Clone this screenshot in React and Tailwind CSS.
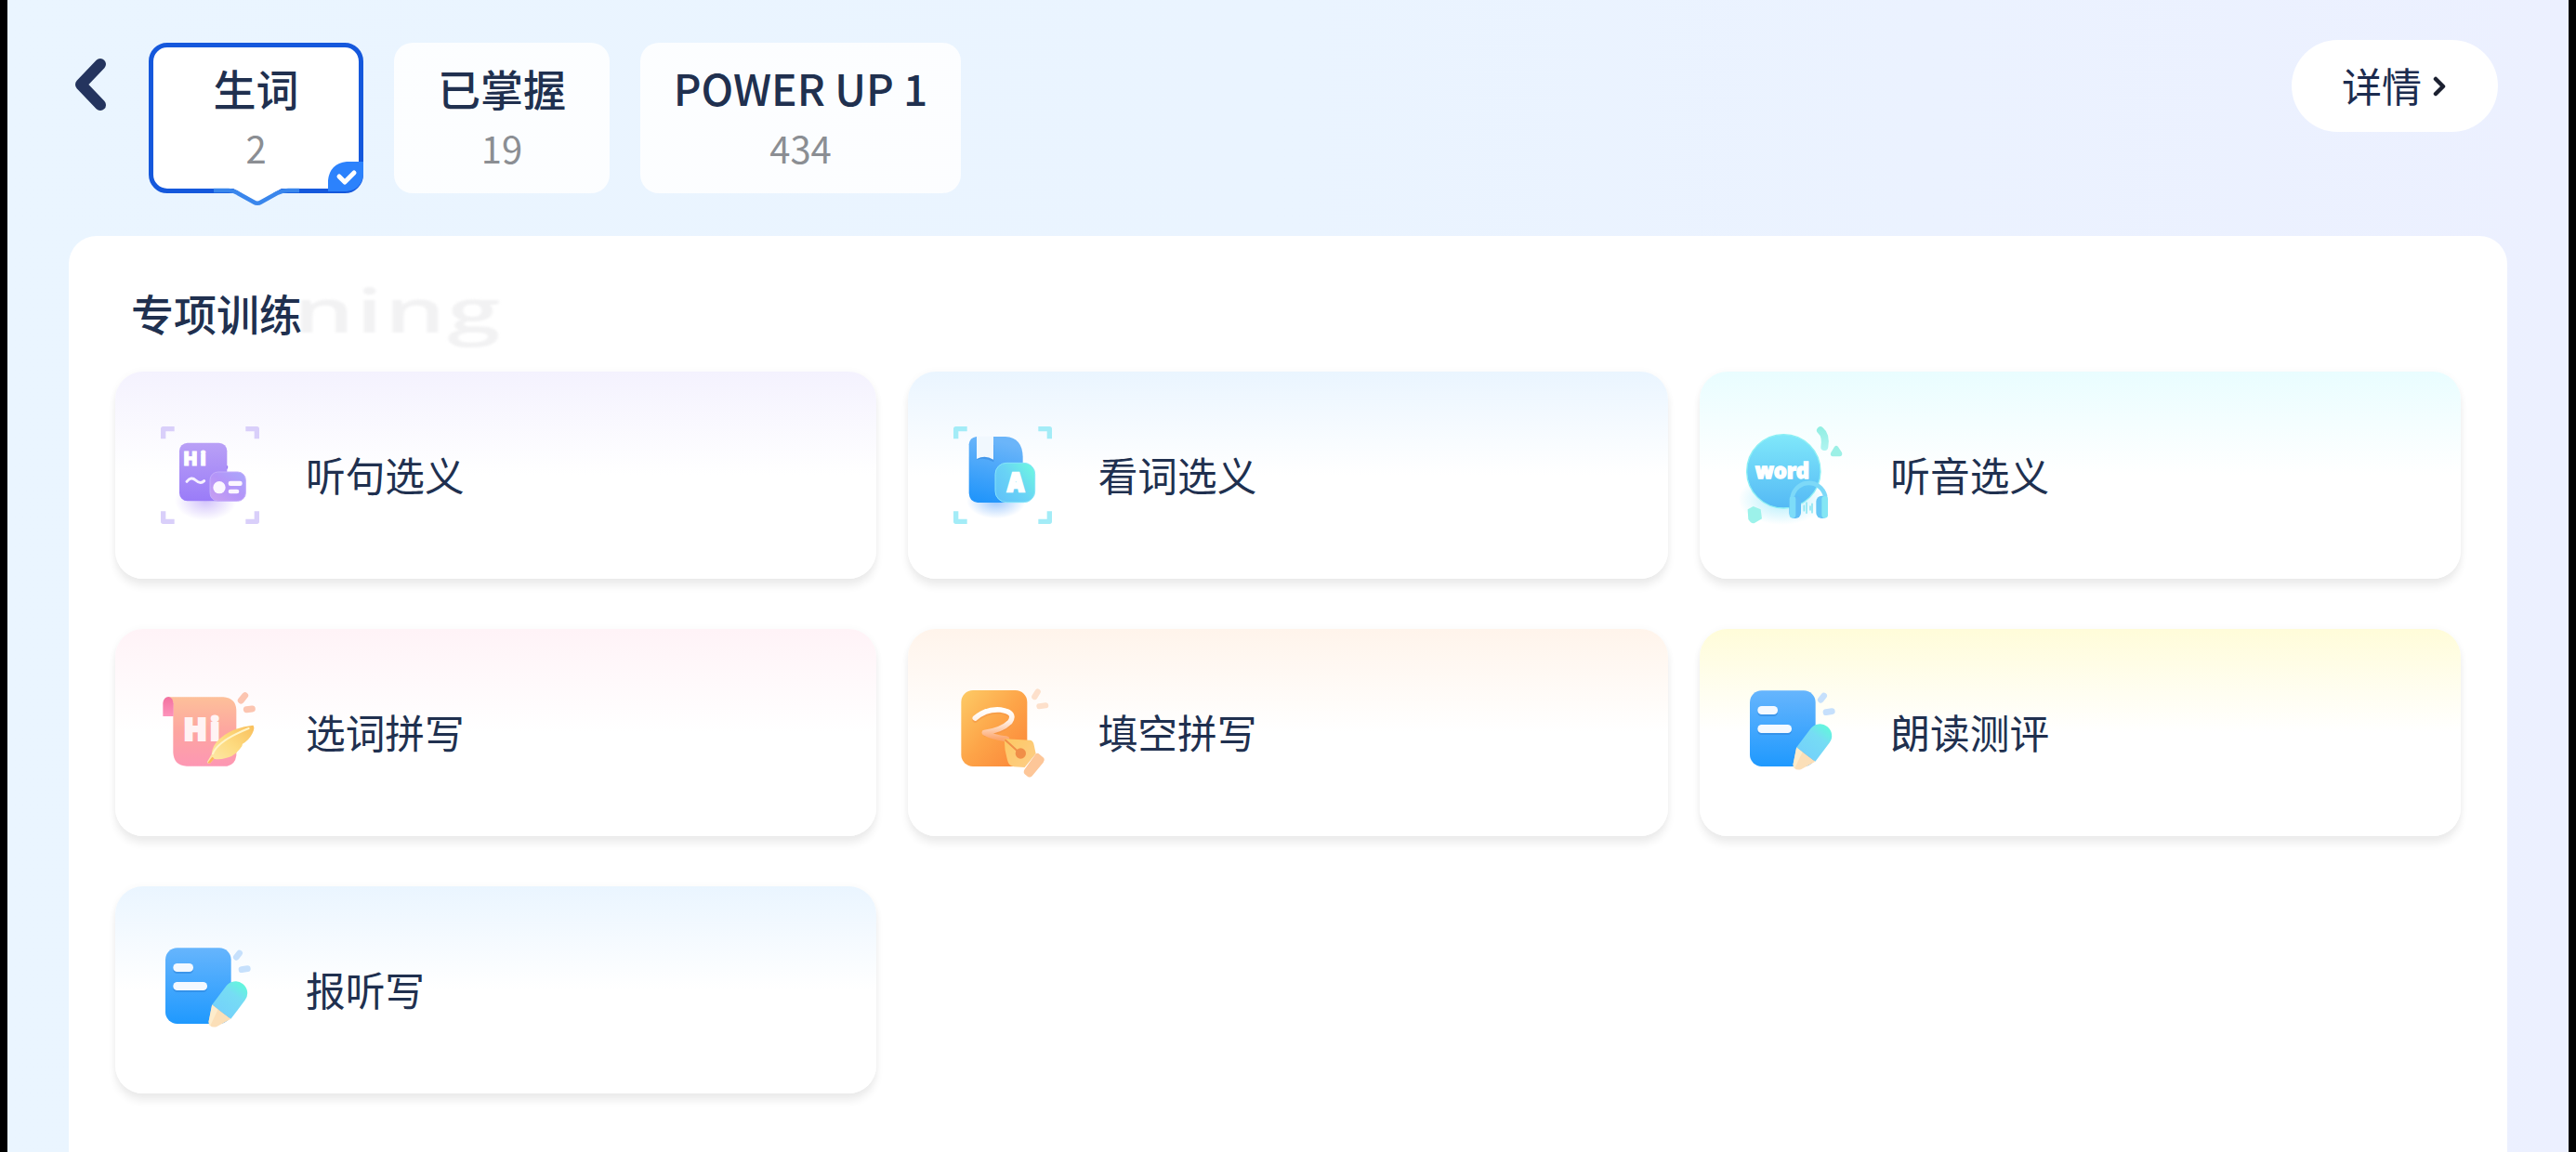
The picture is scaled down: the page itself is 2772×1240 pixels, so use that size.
const tabs = [
  { id: 'new', name: '生词', count: 2, width: 'w-[231px]' },
  { id: 'mastered', name: '已掌握', count: 19, width: 'w-[232px]' },
  { id: 'book', name: 'POWER UP 1', count: 434, width: 'w-[345px]' },
];

const Corners = ({ color }) => (
  <g stroke={color} strokeWidth="16" fill="none" strokeLinejoin="round">
    <path d="M8 40V8H44" />
    <path d="M274 8H310V40" />
    <path d="M8 274V307H44" />
    <path d="M274 307H310V274" />
  </g>
);

const SentenceIcon = () => (
  <svg viewBox="0 0 318 318" className="h-[106px] w-[106px] overflow-visible">
    <defs>
      <linearGradient id="sentence-card" x1="0" y1="0" x2="0" y2="1">
        <stop offset="0" stopColor="#b9a0f6" />
        <stop offset="1" stopColor="#9a7cf8" />
      </linearGradient>
      <linearGradient id="sentence-chip" x1="0" y1="1" x2="1" y2="0">
        <stop offset="0" stopColor="#c9a0f0" />
        <stop offset="0.5" stopColor="#b494f8" />
        <stop offset="1" stopColor="#a9a8fb" />
      </linearGradient>
      <radialGradient id="sentence-shadow">
        <stop offset="0" stopColor="#b59cf8" stopOpacity="0.6" />
        <stop offset="1" stopColor="#b59cf8" stopOpacity="0" />
      </radialGradient>
    </defs>
    <Corners color="#d9cffa" />
    <ellipse cx="145" cy="240" rx="100" ry="64" fill="url(#sentence-shadow)" />
    <path d="M200 142L214 126Q220 130 214 138L204 150Z" fill="#8f6df0" />
    <rect x="60" y="53" width="154" height="188" rx="26" fill="url(#sentence-card)" />
    <text x="72" y="127" fontSize="62" fontWeight="900" letterSpacing="7" fill="#fff" stroke="#fff" strokeWidth="3" className="font-['Noto_Sans']">Hi</text>
    <path d="M84 178Q98 160 113 174T140 176" stroke="#f6f0ff" strokeWidth="9" strokeLinecap="round" fill="none" />
    <rect x="159" y="147" width="115" height="94" rx="26" fill="url(#sentence-chip)" stroke="#c3acfb" strokeWidth="3" />
    <circle cx="189" cy="197" r="20" fill="#fbf6ff" />
    <rect x="218" y="176" width="45" height="16" rx="7" fill="#fbf6ff" />
    <rect x="218" y="203" width="35" height="14" rx="7" fill="#fbf6ff" />
  </svg>
);

const BookIcon = () => (
  <svg viewBox="0 0 318 318" className="h-[106px] w-[106px] overflow-visible">
    <defs>
      <linearGradient id="book-cover" x1="0.2" y1="0" x2="0" y2="1">
        <stop offset="0" stopColor="#6bb5f9" />
        <stop offset="1" stopColor="#1c93fb" />
      </linearGradient>
      <linearGradient id="book-badge" x1="0" y1="1" x2="1" y2="0.2">
        <stop offset="0" stopColor="#5fc0fa" />
        <stop offset="0.55" stopColor="#69d3f5" />
        <stop offset="1" stopColor="#6df5e2" />
      </linearGradient>
      <radialGradient id="book-shadow">
        <stop offset="0" stopColor="#5aa2fb" stopOpacity="0.6" />
        <stop offset="1" stopColor="#5aa2fb" stopOpacity="0" />
      </radialGradient>
    </defs>
    <Corners color="#a3ecf7" />
    <ellipse cx="138" cy="240" rx="96" ry="58" fill="url(#book-shadow)" />
    <path d="M74 33H168Q222 36 224 98V246H78Q52 244 50 216V58Q52 36 74 33Z" fill="url(#book-cover)" />
    <path d="M76 108Q102 98 130 115V60H76Z" fill="#2e7fd6" opacity="0.45" />
    <path d="M75 32H129V107Q102 90 75 105Z" fill="#f1f8fe" />
    <rect x="135" y="118" width="128" height="127" rx="36" fill="url(#book-badge)" stroke="#86e4fa" strokeWidth="3" />
    <text x="174" y="211" fontSize="84" fontWeight="900" fill="#fff" stroke="#fff" strokeWidth="7" textLength="54" lengthAdjust="spacingAndGlyphs" className="font-['Noto_Sans']">A</text>
  </svg>
);

const WordIcon = () => (
  <svg viewBox="0 0 318 318" className="h-[106px] w-[106px] overflow-visible">
    <defs>
      <linearGradient id="word-disc" x1="0" y1="0" x2="0" y2="1">
        <stop offset="0" stopColor="#80e8fa" />
        <stop offset="1" stopColor="#54b9f5" />
      </linearGradient>
      <linearGradient id="word-mint" gradientUnits="userSpaceOnUse" x1="0" y1="0" x2="0" y2="80">
        <stop offset="0" stopColor="#8feee2" />
        <stop offset="1" stopColor="#b2f4f1" />
      </linearGradient>
      <radialGradient id="word-shadow">
        <stop offset="0" stopColor="#9ae9fb" stopOpacity="0.8" />
        <stop offset="1" stopColor="#9ae9fb" stopOpacity="0" />
      </radialGradient>
    </defs>
    <ellipse cx="118" cy="236" rx="140" ry="82" fill="url(#word-shadow)" />
    <circle cx="124" cy="145" r="119" fill="url(#word-disc)" stroke="#8cf0f4" strokeWidth="4" />
    <path d="M243 13Q262 28 256 66" stroke="url(#word-mint)" strokeWidth="24" strokeLinecap="round" fill="none" />
    <path d="M288 66Q294 58 300 66L312 84Q316 96 304 97H282Q272 94 277 84Z" fill="#9cf0e6" />
    <path d="M8 268L26 258L50 268L54 298L30 312Q20 316 10 300Z" fill="#9cf2ea" />
    <text x="32" y="168" fontSize="70" fontWeight="900" fill="#fff" stroke="#fff" strokeWidth="4" textLength="175" lengthAdjust="spacingAndGlyphs" className="font-['Noto_Sans']">word</text>
    <path d="M153 246V224A54 54 0 0 1 258 224V246" stroke="#7dd9f8" strokeWidth="14" fill="none" />
    <rect x="142" y="224" width="38" height="73" rx="18" fill="#5fbdf5" />
    <rect x="229" y="224" width="38" height="73" rx="18" fill="#67c6f5" />
    <rect x="143" y="225" width="20" height="71" rx="10" fill="#7ddcf8" />
    <rect x="247" y="225" width="20" height="71" rx="10" fill="#84e6f4" />
    <path d="M190 256V272M198 246V280M210 258V270M216 250V278" stroke="#8fe6f2" strokeWidth="5" strokeLinecap="round" />
  </svg>
);

const ScrollIcon = () => (
  <svg viewBox="0 0 318 318" className="h-[106px] w-[106px] overflow-visible">
    <defs>
      <linearGradient id="scroll-paper" x1="0" y1="0" x2="0" y2="1">
        <stop offset="0" stopColor="#fdc09a" />
        <stop offset="0.5" stopColor="#fda5a0" />
        <stop offset="1" stopColor="#fd97b4" />
      </linearGradient>
      <linearGradient id="scroll-roll" x1="0" y1="0" x2="0" y2="1">
        <stop offset="0" stopColor="#f2719f" />
        <stop offset="1" stopColor="#fd93bb" />
      </linearGradient>
      <linearGradient id="scroll-feather" x1="1" y1="0" x2="0" y2="1">
        <stop offset="0" stopColor="#f9bf5c" />
        <stop offset="0.5" stopColor="#fddb80" />
        <stop offset="1" stopColor="#fde9b0" />
      </linearGradient>
    </defs>
    <path d="M24 43H202Q243 46 244 86V232Q240 262 214 266H84Q42 264 40 222V60Z" fill="url(#scroll-paper)" />
    <path d="M7 105V62Q10 42 25 42Q39 44 41 64V105Z" fill="url(#scroll-roll)" />
    <text x="73" y="182" fontSize="102" fontWeight="900" letterSpacing="8" fill="#fff3f4" stroke="#fff3f4" strokeWidth="6" textLength="126" lengthAdjust="spacingAndGlyphs" className="font-['Noto_Sans']">Hi</text>
    <path d="M150 252L164 228Q166 198 192 176Q236 140 298 134Q305 142 296 160Q284 184 264 194L262 202Q240 234 210 240Q188 246 172 242L160 256Q150 260 150 252Z" fill="url(#scroll-feather)" />
    <path d="M152 254L166 236Q174 240 172 242L160 256Q154 258 152 254Z" fill="#fbb45c" />
    <path d="M168 226Q184 184 284 144" stroke="#fff4c8" strokeWidth="6" strokeLinecap="round" fill="none" />
    <path d="M259 54L272 38" stroke="#fcc5b1" strokeWidth="21" strokeLinecap="round" />
    <path d="M277 83L295 81" stroke="#fcc5b1" strokeWidth="21" strokeLinecap="round" />
  </svg>
);

const PenIcon = () => (
  <svg viewBox="0 0 318 318" className="h-[106px] w-[106px] overflow-visible">
    <defs>
      <linearGradient id="pen-page" x1="0" y1="0" x2="1" y2="1">
        <stop offset="0" stopColor="#fdcb66" />
        <stop offset="0.5" stopColor="#fda448" />
        <stop offset="1" stopColor="#fb8438" />
      </linearGradient>
      <linearGradient id="pen-stroke" x1="0" y1="0" x2="0" y2="1">
        <stop offset="0" stopColor="#ffffff" />
        <stop offset="0.4" stopColor="#fff0e4" />
        <stop offset="1" stopColor="#fca66e" />
      </linearGradient>
      <linearGradient id="pen-nib" x1="0" y1="0" x2="1" y2="1">
        <stop offset="0" stopColor="#fdc862" />
        <stop offset="1" stopColor="#fdce88" />
      </linearGradient>
    </defs>
    <rect x="25" y="21" width="213" height="246" rx="38" fill="url(#pen-page)" />
    <path d="M70 117Q108 85 158 89Q204 99 178 131Q150 157 104 162" stroke="#ee8a40" strokeOpacity="0.4" strokeWidth="17" strokeLinecap="round" fill="none" />
    <path d="M70 111Q106 80 152 84Q204 92 182 124Q156 150 100 158Q126 172 172 178" stroke="url(#pen-stroke)" strokeWidth="17" strokeLinecap="round" strokeLinejoin="round" fill="none" />
    <path d="M164 178L248 182Q258 184 260 198L266 226L230 270L196 268Q178 266 174 246Q164 212 164 178Z" fill="url(#pen-nib)" />
    <path d="M168 182L212 222" stroke="#f08e48" strokeWidth="6" strokeLinecap="round" />
    <circle cx="217" cy="225" r="17" fill="#f08e48" />
    <path d="M266 226Q272 222 278 228L292 240Q296 246 290 254L254 298Q248 304 240 300L230 292Q224 286 230 276Z" fill="#fdc698" />
    <path d="M262 42L272 26" stroke="#fde0cb" strokeWidth="19" strokeLinecap="round" />
    <path d="M277 73L298 70" stroke="#fde0cb" strokeWidth="18" strokeLinecap="round" />
  </svg>
);

const NoteIcon = ({ id }) => (
  <svg viewBox="0 0 318 318" className="h-[106px] w-[106px] overflow-visible">
    <defs>
      <linearGradient id={`${id}-page`} x1="0" y1="0" x2="0" y2="1">
        <stop offset="0" stopColor="#66b5fd" />
        <stop offset="1" stopColor="#1f99fe" />
      </linearGradient>
      <linearGradient id={`${id}-pencil`} x1="0" y1="0" x2="0" y2="1">
        <stop offset="0" stopColor="#62f7dc" />
        <stop offset="0.4" stopColor="#76dcf4" />
        <stop offset="1" stopColor="#74d2fa" />
      </linearGradient>
    </defs>
    <rect x="15" y="22" width="212" height="245" rx="38" fill={`url(#${id}-page)`} />
    <rect x="40" y="78" width="65" height="27" rx="13" fill="#2a7fd8" opacity="0.5" />
    <rect x="40" y="138" width="110" height="27" rx="13" fill="#2a7fd8" opacity="0.5" />
    <rect x="40" y="72" width="65" height="27" rx="13" fill="#f4f9ff" />
    <rect x="40" y="132" width="110" height="27" rx="13" fill="#f4f9ff" />
    <g transform="translate(161 275) rotate(37)">
      <path d="M-38 -58V-134A38 38 0 0 1 38 -134V-58Z" fill={`url(#${id}-pencil)`} />
      <path d="M-38 -58H38L16 -10Q0 8 -14 -8Z" fill="#fbdfb8" />
      <path d="M-38 -58H-14L-2 0Q-8 0 -14 -8Z" fill="#fdeccb" />
    </g>
    <path d="M244 52L254 39" stroke="#c6e0fc" strokeWidth="20" strokeLinecap="round" />
    <path d="M261 92L280 89" stroke="#c6e0fc" strokeWidth="20" strokeLinecap="round" />
  </svg>
);

const trainings = [
  { name: '听句选义', icon: <SentenceIcon />, tint: 'from-[#f4f2fe]' },
  { name: '看词选义', icon: <BookIcon />, tint: 'from-[#eaf5ff]' },
  { name: '听音选义', icon: <WordIcon />, tint: 'from-[#e9fdff]' },
  { name: '选词拼写', icon: <ScrollIcon />, tint: 'from-[#fff3f7]' },
  { name: '填空拼写', icon: <PenIcon />, tint: 'from-[#fff4eb]' },
  { name: '朗读测评', icon: <NoteIcon id="reading" />, tint: 'from-[#fffcd9]' },
  { name: '报听写', icon: <NoteIcon id="dictation" />, tint: 'from-[#eaf5ff]' },
];

const Tab = ({ tab, active }) => (
  <button
    type="button"
    className={`relative flex h-[162px] flex-col items-center rounded-[20px] ${tab.width} ${active ? 'bg-white' : 'bg-white/85'}`}
  >
    {active && <span className="absolute inset-0 rounded-[20px] border-[5px] border-[#1558dc]" />}
    <span className="mt-[17px] text-[46px] leading-[62px] font-medium whitespace-nowrap text-[#20304f]">{tab.name}</span>
    <span className="mt-[7px] text-[40px] leading-[54px] text-[#8b8e93]">{tab.count}</span>
    {active && (
      <>
        <svg viewBox="0 0 38 32" className="absolute right-0 bottom-[2px] h-8 w-[38px]">
          <path d="M0 32V20Q2 2 20 0H38V14Q36 30 20 32Z" fill="#2c82fc" />
          <path d="M12 16L18 22L28 12" stroke="#fff" strokeWidth="5" strokeLinecap="round" strokeLinejoin="round" fill="none" />
        </svg>
        <svg viewBox="0 0 92 24" className="absolute bottom-[-15px] left-[70px] h-6 w-[92px]">
          <path d="M14 0H80L64 9L47 18L30 9Z" fill="#fff" />
          <path d="M0 6H16Q22 6 26 9L43 18.500Q47 21 51 18.500L68 9Q74 6 80 6H92" stroke="#3a86ec" strokeWidth="4.500" fill="none" />
        </svg>
      </>
    )}
  </button>
);

const TrainingCard = ({ training }) => (
  <button
    type="button"
    className={`flex h-[223px] items-center rounded-[30px] bg-linear-to-b to-white to-50% pl-[49px] text-left shadow-[0_8px_9px_rgba(0,0,0,0.07),0_0_8px_rgba(0,0,0,0.03)] ${training.tint}`}
  >
    {training.icon}
    <span className="-mt-[4px] ml-[50px] text-[42.700px] leading-[60px] text-[#20304f]">{training.name}</span>
  </button>
);

const App = () => (
  <div className="h-[1240px] w-[2772px] overflow-hidden bg-black px-2 font-['Noto_Sans_CJK_SC',sans-serif]">
    <main className="flex h-full flex-col bg-linear-to-r from-[#eaf5ff] via-[#eaf4ff] to-[#ecf0ff] px-[66px]">
      <header className="flex h-[254px] shrink-0 items-start">
        <button type="button" aria-label="返回" className="mt-[62px] ml-[5px] h-[58px] w-[36px]">
          <svg viewBox="0 0 36 58" className="h-full w-full">
            <path d="M29 7L8 29L29 51" stroke="#24345e" strokeWidth="12" strokeLinecap="round" strokeLinejoin="round" fill="none" />
          </svg>
        </button>
        <nav className="mt-[46px] ml-[45px] flex gap-[33px]">
          {tabs.map((tab, i) => (
            <Tab key={tab.id} tab={tab} active={i === 0} />
          ))}
        </nav>
        <button type="button" className="mt-[43px] mr-[10px] ml-auto flex h-[99px] w-[222px] items-center rounded-full bg-white pl-[54px]">
          <span className="-mt-[4px] text-[43px] leading-[60px] text-[#1c2c4f]">详情</span>
          <svg viewBox="0 0 14 22" className="ml-[12px] h-[22px] w-[14px]">
            <path d="M3 3L11 11L3 19" stroke="#1b2030" strokeWidth="4.500" strokeLinecap="round" strokeLinejoin="round" fill="none" />
          </svg>
        </button>
      </header>

      <section className="flex-1 rounded-t-[30px] bg-white px-[50px]">
        <div className="relative flex h-[146px] items-center pt-[18px] pl-[17px]">
          <span className="absolute top-[33px] left-[192px] origin-left scale-x-[1.55] font-['Open_Sans'] text-[66px] leading-[90px] font-semibold tracking-[1.500px] text-[#f2f2f3] blur-[1px]">ning</span>
          <h1 className="relative text-[46px] leading-[62px] font-medium text-[#20304f]">专项训练</h1>
        </div>
        <div className="grid grid-cols-3 gap-x-[34px] gap-y-[54px]">
          {trainings.map((training) => (
            <TrainingCard key={training.name} training={training} />
          ))}
        </div>
      </section>
    </main>
  </div>
);

export default App;
